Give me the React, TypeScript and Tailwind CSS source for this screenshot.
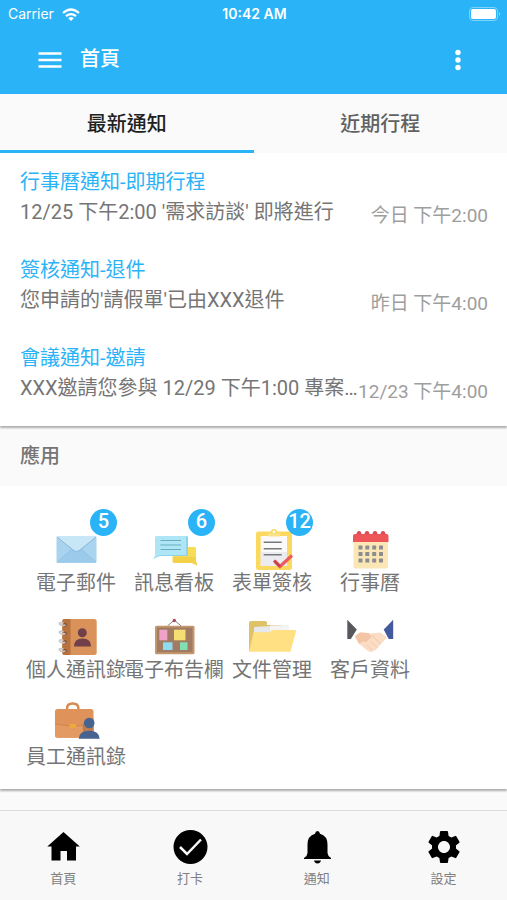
import type { ReactNode } from "react";
import { MdSettings } from "react-icons/md";

type Notice = { title: string; body: string; time: string };

const notices: Notice[] = [
  { title: "行事曆通知-即期行程", body: "12/25 下午2:00 '需求訪談' 即將進行", time: "今日 下午2:00" },
  { title: "簽核通知-退件", body: "您申請的'請假單'已由XXX退件", time: "昨日 下午4:00" },
  { title: "會議通知-邀請", body: "XXX邀請您參與 12/29 下午1:00 專案…", time: "12/23 下午4:00" },
];

function AppIcon({ children }: { children: ReactNode }) {
  return (
    <svg viewBox="0 0 48 44" className="h-11 w-12 overflow-visible" aria-hidden="true">
      {children}
    </svg>
  );
}

const MailIcon = () => (
  <AppIcon>
    <rect x="4.5" y="11" width="40" height="27" rx="1.5" fill="#a9d3ee" />
    <path d="M5 37.5 19.5 24h10L44 37.5z" fill="#9bcaea" />
    <path d="M5 12 24.5 27 44 12v-1H5z" fill="#c9e6f6" />
    <path d="M5 12l16.500 13.500q3 2 6 0L44 12" fill="none" stroke="#86bbdf" strokeWidth="1" />
    <path d="M5 37.500 18.500 25M44 37.500 30.500 25" stroke="#8fc2e4" strokeWidth=".8" />
  </AppIcon>
);

const MessageIcon = () => (
  <AppIcon>
    <path d="M24 22h20.500q1.500 0 1.500 1.500V36l1 4.500-5-2.500H24q-1.300 0-1.300-1.300V23z" fill="#f8dc55" />
    <path d="M24 32h22v4l1 4.500-5-2.500H24q-1.300 0-1.300-1.300V32z" fill="#f3d24a" />
    <path d="M6.800 11H36.500q1.500 0 1.500 1.500v17q0 1.500-1.500 1.500H10l-7 3q2.300-2 2.300-5V12.500q0-1.500 1.500-1.500z" fill="#8fd3ea" />
    <path d="M6.800 11H36v19H10l-6.500 3.500q1.800-2 1.800-5V12.500q0-1.500 1.500-1.500z" fill="#aee6f5" />
    <path d="M10.500 15.500H31M10.500 20H31M10.500 24.500H31" stroke="#66aebf" strokeWidth="1.2" />
  </AppIcon>
);

const FormIcon = () => (
  <AppIcon>
    <rect x="8" y="6.500" width="36" height="38.500" rx="2.500" fill="#fbd95f" />
    <path d="M20 7.500h2.500q0-3.500 3.500-3.500t3.500 3.500H32v4H20z" fill="#f8d969" />
    <circle cx="26" cy="6.800" r="1.300" fill="#fff" />
    <path d="M12.700 11H39v30H12.700z" fill="#fafafa" />
    <path d="M12.700 27H39v14H12.700z" fill="#ececf0" />
    <path d="M20 8.500h12v3H20z" fill="#fbe28a" />
    <path d="M15.700 17.300h18M15.700 23.700h18M15.700 29.700h18" stroke="#77787d" strokeWidth="1.500" />
    <path d="M27 36.500l5 5 12-11" fill="none" stroke="#ed5a5a" strokeWidth="3.200" />
    <path d="M26 35.500l6 6" stroke="#c84450" strokeWidth="3" />
  </AppIcon>
);

const CalendarIcon = () => (
  <AppIcon>
    <rect x="7.500" y="10" width="34.500" height="33.500" rx="2" fill="#fbe6b5" />
    <path d="M7 17v-6q0-2 2-2h31.500q2 0 2 2v6z" fill="#ee5558" />
    {[13, 21, 29, 37].map((x) => (
      <path key={x} d={`M${x - 2.5} 9.500q0-3.500 2.500-3.500t2.500 3.500z`} fill="#dd4d58" />
    ))}
    {[22.500, 29, 35.500].map((y) =>
      [14.500, 21.300, 28.200, 35].map((x) => (
        <rect key={`${x}-${y}`} x={x - 2} y={y - 2} width="4" height="4" rx=".5" fill="#8d8c91" />
      )),
    )}
  </AppIcon>
);

const AddressBookIcon = () => (
  <AppIcon>
    <rect x="10.300" y="7" width="34.400" height="36" rx="2.500" fill="#d9935a" />
    <path d="M12.500 7h6v36h-6q-2.200 0-2.200-2.200V9.200q0-2.200 2.200-2.200z" fill="#b7723f" />
    {[12, 20.700, 29.300, 38].map((y) => (
      <g key={y}>
        <circle cx="13" cy={y + 0.8} r="1.800" fill="#7d4b32" />
        <path d={`M13.500 ${y + 1}q-5 1-6-1t4-1`} fill="none" stroke="#c9c8cb" strokeWidth="1.700" />
      </g>
    ))}
    <circle cx="30.300" cy="20.800" r="4.500" fill="#71404a" />
    <path d="M22 34.500q0-8 8.500-8t8.500 8z" fill="#71404a" />
  </AppIcon>
);

const BoardIcon = () => (
  <AppIcon>
    <path d="M17.500 14l6.800-6 6.800 6" fill="none" stroke="#8b7c78" strokeWidth="1" />
    <circle cx="24.300" cy="8.500" r="1.700" fill="#a8485c" />
    <rect x="5" y="13.700" width="39.500" height="28.500" rx="1.500" fill="#c5976f" />
    <rect x="7" y="15.500" width="35.500" height="24.800" fill="#a27c62" />
    <path d="M9.300 17.700h8v10.600h-8z" fill="#f0a3c8" />
    <path d="M24 17.700h11.500v10.600H24z" fill="#f3df72" />
    <path d="M13 30.300h9.500V38H13z" fill="#8fdcf0" />
    <path d="M30 30.300h7.500V38H30z" fill="#83e0b4" />
  </AppIcon>
);

const FolderIcon = () => (
  <AppIcon>
    <path d="M1 39V11q0-2 2-2h14q2 0 2 2v2h15v26z" fill="#dfc166" />
    <path d="M6 15l35-2v20H6z" fill="#e5e9eb" />
    <path d="M22 13.500h19V25H22z" fill="#f4f4f4" />
    <path d="M5.500 20.300h15.500l3.500-2.300H47q1.500 0 1 1.500l-5.500 20.300H1q0-1 .5-2z" fill="#ffe183" />
  </AppIcon>
);

const HandshakeIcon = () => (
  <AppIcon>
    <path d="M1.300 7.700l9.500 9.800-6 9.500H1.300z" fill="#56585c" />
    <path d="M47.200 7.700l-9.500 9.800 5 9.500h4.500z" fill="#435b9e" />
    <path d="M9 24l5-3.500 10 1 10.500-1 6.500 5-7 7.500q-3 4.500-7 6.500-2.500 1-5-.5l-8-6.500-4-5.500z" fill="#fbdcc4" />
    <path d="M9 24l5-3.500 8.500.5 2.500 3-4 5q-2.500 2-3.500 0L13 32z" fill="#f3c5a6" />
    <path d="M20.500 29l6-5.500 8 8.500M25 29.500l6 6M21 33l5 5" fill="none" stroke="#efc2a3" strokeWidth=".9" />
  </AppIcon>
);

const BriefcaseIcon = () => (
  <AppIcon>
    <path d="M15 11V9.500q0-5 5.700-5t5.700 5V11" fill="none" stroke="#d78b51" strokeWidth="2.500" />
    <rect x="3" y="10" width="38.500" height="28.700" rx="2.500" fill="#df935b" />
    <path d="M3 25l15 2h6l17.500-2v11q0 2.700-2.500 2.700H5.500Q3 38.700 3 36z" fill="#e39b63" />
    <path d="M3 25l15 2h6l17.500-2" fill="none" stroke="#c98149" strokeWidth=".8" />
    <path d="M17.500 25h6.500v2q0 2-3.200 2t-3.300-2z" fill="#eda93c" />
    <path d="M31 38.700v-7q-2-8 4.500-10.700l6-2v19.700z" fill="#be7c51" />
    <circle cx="37.200" cy="24" r="5.300" fill="#46648f" />
    <path d="M26.700 39.700q.5-8 10.500-8t10.500 8z" fill="#46648f" />
  </AppIcon>
);

const apps: { label: string; icon: ReactNode; badge?: number }[] = [
  { label: "電子郵件", icon: <MailIcon />, badge: 5 },
  { label: "訊息看板", icon: <MessageIcon />, badge: 6 },
  { label: "表單簽核", icon: <FormIcon />, badge: 12 },
  { label: "行事曆", icon: <CalendarIcon /> },
  { label: "個人通訊錄", icon: <AddressBookIcon /> },
  { label: "電子布告欄", icon: <BoardIcon /> },
  { label: "文件管理", icon: <FolderIcon /> },
  { label: "客戶資料", icon: <HandshakeIcon /> },
  { label: "員工通訊錄", icon: <BriefcaseIcon /> },
];

const navItems: { label: string; icon: ReactNode }[] = [
  {
    label: "首頁",
    icon: (
      <svg viewBox="0 0 40 40" className="size-10" aria-hidden="true">
        <path d="M20.500 5 36.800 19.500H33V33.500h-9V24h-6.500v9.500h-9v-14H4.300z" />
      </svg>
    ),
  },
  {
    label: "打卡",
    icon: (
      <svg viewBox="0 0 40 40" className="size-10" aria-hidden="true">
        <circle cx="20.500" cy="20" r="17" />
        <path d="M10 20l7 7L31 12.500" fill="none" stroke="#f8f8f8" strokeWidth="2.500" />
      </svg>
    ),
  },
  {
    label: "通知",
    icon: (
      <svg viewBox="0 0 40 40" className="size-10" aria-hidden="true">
        <path d="M20.500 4q2 0 2.500 2.800 7.500 2.200 7.500 10.700V26q0 2.500 3.500 5v1H7v-1q3.500-2.500 3.500-5v-8.500Q10.500 9 18 6.800 18.500 4 20.500 4z" />
        <path d="M17 33.500h7q-.8 3-3.500 3t-3.500-3z" />
      </svg>
    ),
  },
  { label: "設定", icon: <MdSettings className="size-10" aria-hidden="true" /> },
];

function StatusBar() {
  return (
    <div className="grid h-7 grid-cols-3 items-center pr-1.5 pl-2 font-['Inter',sans-serif] text-sm">
      <div className="flex items-center gap-2">
        <span>Carrier</span>
        <svg viewBox="0 0 18 13" className="h-[13px] w-[18px]" aria-label="Wi-Fi">
          <g fill="none" stroke="currentColor" strokeWidth="2.200">
            <path d="M1 5q8-7 16 0M4 8.200q5-4.200 10 0" />
          </g>
          <path d="M6.200 10.200q2.800-2.200 5.600 0L9 13z" fill="currentColor" />
        </svg>
      </div>
      <span className="text-center font-semibold">10:42 AM</span>
      <svg viewBox="0 0 32 14" className="h-3.5 w-8 justify-self-end" aria-label="Battery">
        <rect x=".5" y=".5" width="28" height="13" rx="3.500" fill="none" stroke="#7fd2fa" />
        <rect x="2" y="2" width="25" height="10" rx="2" fill="#fff" />
        <path d="M30 5q2 2 0 4z" fill="#9bdcfb" />
      </svg>
    </div>
  );
}

export default function App() {
  return (
    <div className="flex min-h-screen flex-col bg-[#fafafa] font-['Roboto','Noto_Sans_CJK_TC',sans-serif] text-xl text-[#757575]">
      <header className="bg-[#2ab3f6] text-white">
        <StatusBar />
        <div className="flex h-[66px] items-start px-9">
          <button type="button" aria-label="選單" className="mt-[18px] p-0.5">
            <svg viewBox="0 0 24 28" className="h-7 w-6">
              <path d="M.5 5.500h23M.5 12h23M.5 18.500h23" stroke="currentColor" strokeWidth="2.500" />
            </svg>
          </button>
          <h1 className="mt-[17px] ml-4 text-xl leading-7 font-medium">首頁</h1>
          <button type="button" aria-label="更多" className="mt-[18px] ml-auto p-0.5">
            <svg viewBox="0 0 22 28" className="h-7 w-[22px]" fill="currentColor">
              <circle cx="11" cy="4.500" r="2.700" />
              <circle cx="11" cy="12" r="2.700" />
              <circle cx="11" cy="19.500" r="2.700" />
            </svg>
          </button>
        </div>
      </header>

      <div role="tablist" className="grid h-[59px] grid-cols-2 font-medium">
        <button type="button" role="tab" aria-selected="true" className="border-b-3 border-[#2ab3f6] pt-1 text-[#212121]">
          最新通知
        </button>
        <button type="button" role="tab" aria-selected="false" className="border-b-3 border-transparent pt-1 text-[#616161]">
          近期行程
        </button>
      </div>

      <ul className="bg-white pb-[9px] shadow-[0_2px_2px_#00000050]">
        {notices.map((notice) => (
          <li key={notice.title} className="flex h-[88px] pr-[19px] pl-5">
            <div className="min-w-0 flex-1 pt-3.5 leading-[30px] whitespace-nowrap">
              <h2 className="text-[#2ab3f6]">{notice.title}</h2>
              <p>{notice.body}</p>
            </div>
            <time className="pt-12 text-[19px] leading-[30px] whitespace-nowrap text-[#9e9e9e]">{notice.time}</time>
          </li>
        ))}
      </ul>

      <section>
        <h2 className="px-5 pt-4 pb-4 leading-7 font-medium">應用</h2>
        <ul className="grid grid-cols-[repeat(auto-fill,98px)] bg-white px-[27px] pt-6 pb-[18px] shadow-[0_2px_2px_#00000050]">
          {apps.map((app) => (
            <li key={app.label}>
              <button type="button" className="relative flex w-full flex-col items-center pt-[15px]">
                {app.icon}
                <span className="leading-7 whitespace-nowrap">{app.label}</span>
                {app.badge !== undefined && (
                  <span className="absolute -top-px right-2 size-[27px] rounded-full bg-[#2ab3f6] text-center leading-6 font-medium text-white">
                    {app.badge}
                  </span>
                )}
              </button>
            </li>
          ))}
        </ul>
      </section>

      <nav className="mt-auto grid h-[90px] grid-cols-4 border-t border-[#dcdcdc] bg-[#f8f8f8]">
        {navItems.map((item) => (
          <a key={item.label} href="#" className="flex flex-col items-center pt-4">
            <span className="text-black">{item.icon}</span>
            <span className="mt-0.5 text-[13px] leading-5 text-[#808080]">{item.label}</span>
          </a>
        ))}
      </nav>
    </div>
  );
}
